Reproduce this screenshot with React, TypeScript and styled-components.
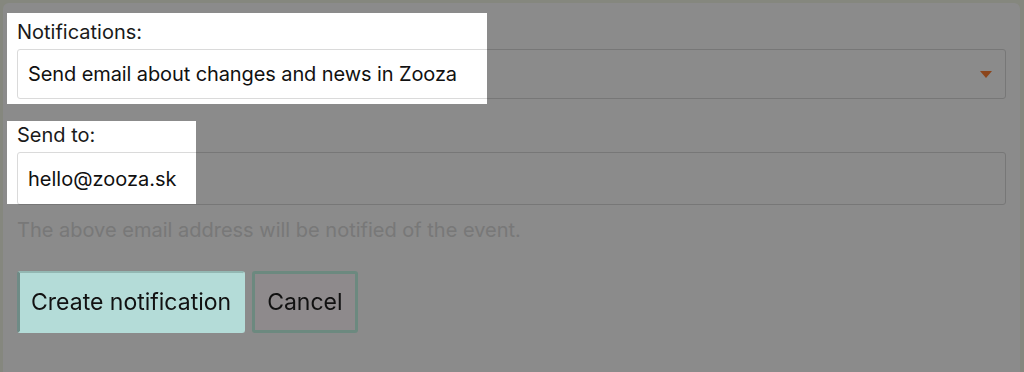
import React from "react";
import styled, { createGlobalStyle } from "styled-components";

const GlobalStyle = createGlobalStyle`
  html, body {
    margin: 0;
    padding: 0;
    background: #f4f8e7;
    font-family: Inter, "Noto Sans", "Liberation Sans", sans-serif;
  }
  body {
    width: 1024px;
    height: 372px;
    overflow: hidden;
  }
`;

const Card = styled.div`
  margin: 3px 4px 0 3px;
  height: 369px;
  background: #ffffff;
  border-radius: 6px 6px 0 0;
  padding: 17px 14px 0 14px;
  box-sizing: border-box;
`;

const Field = styled.div`
  display: flex;
  flex-direction: column;
  gap: 5px;
  & + & {
    margin-top: 24px;
  }
`;

const Label = styled.label`
  font-size: 20px;
  line-height: 24px;
  color: #1a1a1a;
`;

const SelectBox = styled.div`
  display: flex;
  align-items: center;
  height: 50px;
  padding: 0 10px;
  box-sizing: border-box;
  border: 1px solid #dadada;
  border-radius: 3px;
  font-size: 20px;
  letter-spacing: -0.1px;
  color: #111;
`;

const Caret = styled.span`
  margin-left: auto;
  margin-right: 3px;
  width: 0;
  height: 0;
  border-left: 6px solid transparent;
  border-right: 6px solid transparent;
  border-top: 7px solid #ff7f33;
`;

const TextInput = styled.div`
  display: flex;
  align-items: center;
  height: 53px;
  padding: 0 10px;
  box-sizing: border-box;
  border: 1px solid #dadada;
  border-radius: 3px;
  font-size: 20px;
  color: #111;
`;

const Help = styled.p`
  margin: 13px 0 0 0;
  font-size: 20px;
  line-height: 24px;
  color: #dcdcdc;
`;

const Actions = styled.div`
  position: relative;
  z-index: 2;
  display: flex;
  gap: 7px;
  margin-top: 29px;
`;

const Button = styled.button<{ $primary?: boolean }>`
  height: 62px;
  box-sizing: border-box;
  font-family: inherit;
  font-size: 23px;
  color: #111;
  white-space: nowrap;
  border-radius: 3px;
  cursor: pointer;
  padding: 0 12px;
  background: ${(p) => (p.$primary ? "#b4dcd8" : "#8e8a8c")};
  border: ${(p) => (p.$primary ? "2px solid #b4dcd8" : "3px solid #6c897f")};
  ${(p) =>
    p.$primary &&
    `
    padding: 0 12px 0 11px;
    border-left: 3px solid #6e8b86;
    border-top-color: #93b8b3;
  `}
`;

const Overlay = styled.div`
  position: fixed;
  inset: 0;
  z-index: 1;
  background: rgba(0, 0, 0, 0.455);
  pointer-events: none;
  clip-path: polygon(
    evenodd,
    0 0, 100% 0, 100% 100%, 0 100%, 0 0,
    7px 13px, 487px 13px, 487px 104px, 7px 104px, 7px 13px,
    7px 121px, 196px 121px, 196px 204px, 7px 204px, 7px 121px,
    7px 13px, 0 0
  );
`;

export default function App() {
  return (
    <>
      <GlobalStyle />
      <Card>
        <Field>
          <Label>Notifications:</Label>
          <SelectBox>
            Send email about changes and news in Zooza
            <Caret />
          </SelectBox>
        </Field>
        <Field>
          <Label>Send to:</Label>
          <TextInput>hello@zooza.sk</TextInput>
        </Field>
        <Help>The above email address will be notified of the event.</Help>
        <Actions>
          <Button $primary>Create notification</Button>
          <Button>Cancel</Button>
        </Actions>
      </Card>
      <Overlay />
    </>
  );
}
